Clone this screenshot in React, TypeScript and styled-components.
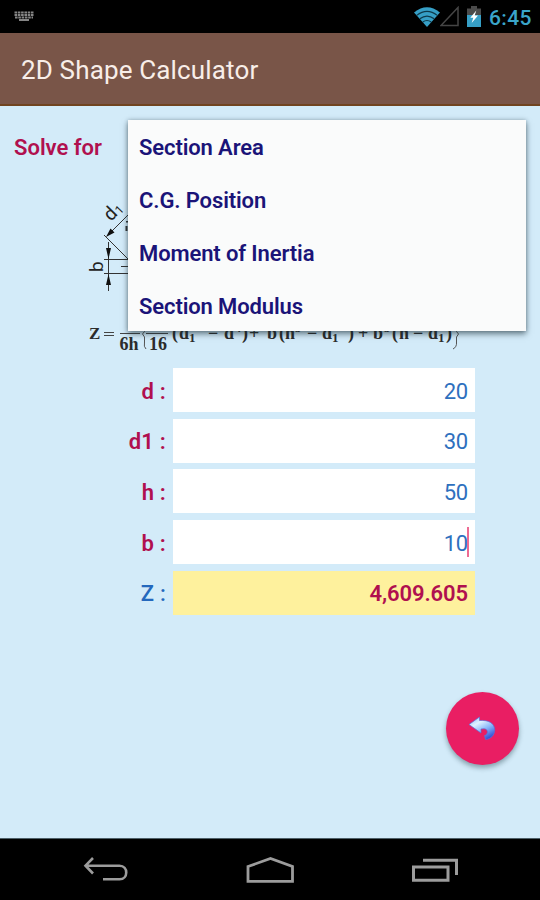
import React from 'react';
import styled, { createGlobalStyle } from 'styled-components';

const GlobalStyle = createGlobalStyle`
  * { box-sizing: border-box; }
  body { margin: 0; background: #d3ebf9; font-family: Roboto, sans-serif; }
`;

const Screen = styled.div`
  width: 540px;
  height: 900px;
  display: flex;
  flex-direction: column;
  overflow: hidden;
  background: #d3ebf9;
`;

const StatusBar = styled.header`
  height: 33px;
  flex: none;
  display: flex;
  align-items: center;
  justify-content: space-between;
  padding: 0 8px 0 14px;
  background: #000;
`;

const StatusGroup = styled.div`
  display: flex;
  align-items: center;
`;

const Battery = styled.svg`
  margin-left: 8px;
`;

const Clock = styled.span`
  width: 43px;
  margin-left: 8px;
  font-size: 21px;
  line-height: 33px;
  letter-spacing: 0.4px;
  font-weight: 500;
  color: #3aa5ca;
  padding-top: 3px;
`;

const AppBar = styled.div`
  height: 73px;
  flex: none;
  display: flex;
  align-items: center;
  padding: 3px 21px 0;
  background: #795548;
  border-bottom: 2px solid #704420;
`;

const Title = styled.h1`
  margin: 0;
  font-size: 26px;
  font-weight: 400;
  letter-spacing: 0.15px;
  color: #f8eee9;
`;

const Content = styled.main`
  position: relative;
  flex: 1;
  display: flex;
  flex-direction: column;
`;

const SolveLabel = styled.div`
  height: 84px;
  padding: 29px 0 0 14px;
  font-size: 22px;
  line-height: 26px;
  font-weight: 600;
  letter-spacing: 0;
  color: #b0104f;
`;

const Figure = styled.svg`
  display: block;
  flex: none;
  margin-left: 80px;
`;

const Popup = styled.ul`
  position: absolute;
  left: 128px;
  top: 14px;
  width: 398px;
  height: 211px;
  margin: 0;
  padding: 0;
  list-style: none;
  background: #fafbfb;
  box-shadow: 0 3px 6px rgba(20, 40, 50, 0.55), 0 0 4px rgba(20, 40, 50, 0.25);
`;

const Option = styled.li`
  height: 52.9px;
  padding: 1px 11px 0;
  font-size: 22px;
  line-height: 53px;
  font-weight: 600;
  letter-spacing: -0.12px;
  color: #1a1478;
`;

const Fields = styled.div`
  display: grid;
  grid-template-columns: 166px 302px;
  column-gap: 7px;
  row-gap: 6.7px;
  padding-top: 8px;
`;

const Label = styled.label<{ $result?: boolean }>`
  display: flex;
  align-items: center;
  justify-content: flex-end;
  height: 44px;
  padding-top: 2px;
  font-size: 22px;
  font-weight: ${(p) => (p.$result ? 500 : 600)};
  letter-spacing: 0.2px;
  white-space: pre;
  color: ${(p) => (p.$result ? '#2468bd' : '#b0104f')};
`;

const Field = styled.div<{ $result?: boolean }>`
  display: flex;
  align-items: center;
  justify-content: flex-end;
  height: 44px;
  padding: 2px 7px 0 0;
  font-size: 22px;
  letter-spacing: ${(p) => (p.$result ? '-0.1px' : '-0.2px')};
  font-weight: ${(p) => (p.$result ? 600 : 400)};
  color: ${(p) => (p.$result ? '#b0104f' : '#2e70be')};
  background: ${(p) => (p.$result ? '#fef19d' : '#fff')};
`;

const Caret = styled.span`
  width: 1.5px;
  height: 30px;
  margin: -3px -0.5px 0 -1px;
  background: #ee6b93;
`;

const BackButton = styled.button`
  position: absolute;
  right: 21px;
  bottom: 73px;
  width: 73px;
  height: 73px;
  padding: 0 2px 2px 0;
  border: 0;
  border-radius: 50%;
  display: grid;
  place-items: center;
  background: #e91e63;
  box-shadow: 0 3px 5px rgba(20, 50, 60, 0.4);
`;

const NavBar = styled.nav`
  height: 62px;
  flex: none;
  display: flex;
  justify-content: space-between;
  align-items: center;
  padding: 0 81px 0 83px;
  background: #000;
  border-top: 1px solid #4d5f68;
`;

const rows = [
  { name: 'd', value: '20' },
  { name: 'd1', value: '30' },
  { name: 'h', value: '50' },
  { name: 'b', value: '10', focused: true },
  { name: 'Z', value: '4,609.605', result: true },
];

const options = ['Section Area', 'C.G. Position', 'Moment of Inertia', 'Section Modulus'];

const KeyboardIcon = () => (
  <svg width="20" height="11" viewBox="0 0 20 11" fill="none" stroke="#858585">
    <path d="M0.5 1.5h19M0.5 4h19M1 6.5h18" strokeWidth="1.8" strokeDasharray="2.6 0.7" />
    <path d="M5 9h10" strokeWidth="2" />
  </svg>
);

const WifiIcon = () => (
  <svg width="26" height="20" viewBox="0 0 26 20">
    <path d="M0 5.5Q13 -5 26 5.5L13 20Z" fill="#369fc6" />
    <path d="M2.7 8.4Q13 0.4 23.3 8.4M5.8 11.8Q13 6.3 20.2 11.8M8.8 15.1Q13 11.9 17.2 15.1" fill="none" stroke="#0e3a4b" strokeWidth="1.2" />
  </svg>
);

const SignalIcon = () => (
  <svg width="19" height="21" viewBox="0 0 19 21">
    <path d="M18 1.5V19.5H1Z" fill="none" stroke="#454545" strokeWidth="1.5" />
  </svg>
);

const BatteryIcon = () => (
  <Battery width="14" height="21" viewBox="0 0 14 21">
    <path d="M4 0h6v2.500h4V9H0V2.500h4Z" fill="#4b4b4b" />
    <path d="M0 9h14v12H0Z" fill="#369fc6" />
    <path d="M9.3 4.5L3.3 11.7H6.3L4.7 17L11 9.5H7.7Z" fill="#fff" />
  </Battery>
);

const SectionFigure = () => (
  <Figure width="390" height="170" viewBox="80 190 390 170">
    <g fill="none" stroke="#333" strokeWidth="1">
      <path d="M104 235L129 260M107 236L130 213M104 259.5H132M104 273.500H132M108.5 242V291M121 266.5H132" />
      <path d="M127 221v1.500M126.500 226v5" strokeWidth="2" />
    </g>
    <path d="M106 237L110.500 228.500L114.500 232.500ZM108.500 259L106 248H111ZM108.500 274L106 285H111Z" fill="#111" />
    <g fontFamily="Roboto, sans-serif" fill="#222">
      <text transform="translate(111 222) rotate(-46)" fontSize="19">d</text>
      <text transform="translate(120 215) rotate(-46)" fontSize="12">1</text>
      <text transform="translate(102.500 272) rotate(-90)" fontSize="19">b</text>
    </g>
    <g fontFamily="Liberation Serif, serif" fontWeight="700" fontSize="18" fill="#2c2c2c">
      <text x="89" y="339" fontSize="17">Z</text>
      <text x="119.5" y="350" textLength="19">6h</text>
      <text x="149" y="350" textLength="18">16</text>
      <text x="172" y="338.500">(</text>
      <text x="179" y="338.500">d</text>
      <text x="189" y="342" fontSize="13">1</text>
      <text x="208" y="338.500">−</text>
      <text x="224" y="338.500">d</text>
      <text x="235" y="332" fontSize="12">4</text>
      <text x="242" y="338.500">)</text>
      <text x="249" y="338.500">+</text>
      <text x="267" y="338.500">b</text>
      <text x="279" y="338.500">(</text>
      <text x="285" y="338.500">h</text>
      <text x="295" y="332" fontSize="12">3</text>
      <text x="307" y="338.500">−</text>
      <text x="322" y="338.500">d</text>
      <text x="332" y="342" fontSize="13">1</text>
      <text x="348" y="338.500">)</text>
      <text x="358" y="338.500">+</text>
      <text x="373" y="338.500">b</text>
      <text x="384" y="332" fontSize="12">3</text>
      <text x="392" y="338.500">(</text>
      <text x="399" y="338.500">h</text>
      <text x="413" y="338.500">−</text>
      <text x="428" y="338.500">d</text>
      <text x="438" y="342" fontSize="13">1</text>
      <text x="446" y="338.500">)</text>
    </g>
    <path d="M104 332.500H114M104 335.500H114M120 333.500H140M146 333.500H168" stroke="#444" fill="none" />
    <path d="M146 319Q143 321 144.500 328Q145.500 332 142.500 334Q145.500 336 144.500 342Q143.500 347 146 349M455 319Q458 321 456.500 328Q455.500 332 458.500 334Q455.500 336 456.500 342Q457 347 453 349" stroke="#555" fill="none" />
  </Figure>
);

const UndoIcon = () => (
  <svg width="28" height="24" viewBox="0 0 28 24">
    <defs>
      <linearGradient id="undoFill" x1="0" y1="0" x2="0.65" y2="1">
        <stop offset="0" stopColor="#7fb4fb" />
        <stop offset="0.35" stopColor="#e0f3ff" />
        <stop offset="0.65" stopColor="#8bb9fa" />
        <stop offset="1" stopColor="#3855d7" />
      </linearGradient>
    </defs>
    <path d="M1 8.500L11.500 1V4.500C20 3.800 26.500 7 26.700 13.500C26.800 19 23 23 17.500 23.500L16.500 19.500C20.500 18.500 20.500 13 16 12.800L13 13V17Z" fill="url(#undoFill)" stroke="#5a70d8" strokeWidth="0.7" />
  </svg>
);

const NavBackIcon = () => (
  <svg width="46" height="26" viewBox="84 859 46 26" fill="none" stroke="#9c9c9c" strokeWidth="2.600">
    <path d="M94 860L86.500 867.700L94 875.500M87 867.700H120.500C129.500 867.700 129.500 881.300 120.500 881.300H104" />
  </svg>
);

const NavHomeIcon = () => (
  <svg width="50" height="28" viewBox="245 856 50 28" fill="none" stroke="#9c9c9c" strokeWidth="2.800">
    <path d="M248 866.500L270.500 858.500L292.500 866.500V881.300H248Z" />
  </svg>
);

const NavRecentIcon = () => (
  <svg width="48" height="26" viewBox="412 858 48 26" fill="none" stroke="#9c9c9c" strokeWidth="3">
    <path d="M414.500 868H449V881.300H414.500ZM424 861.300H457.500V876" />
  </svg>
);

export default function App() {
  return (
    <>
      <GlobalStyle />
      <Screen>
        <StatusBar>
          <KeyboardIcon />
          <StatusGroup>
            <WifiIcon />
            <SignalIcon />
            <BatteryIcon />
            <Clock>6:45</Clock>
          </StatusGroup>
        </StatusBar>
        <AppBar>
          <Title>2D Shape Calculator</Title>
        </AppBar>
        <Content>
          <SolveLabel>Solve for</SolveLabel>
          <SectionFigure />
          <Fields>
            {rows.map((r) => (
              <React.Fragment key={r.name}>
                <Label $result={r.result}>{r.name + ' :'}</Label>
                <Field $result={r.result}>
                  {r.value}
                  {r.focused && <Caret />}
                </Field>
              </React.Fragment>
            ))}
          </Fields>
          <Popup>
            {options.map((o) => (
              <Option key={o}>{o}</Option>
            ))}
          </Popup>
          <BackButton aria-label="Back">
            <UndoIcon />
          </BackButton>
        </Content>
        <NavBar>
          <NavBackIcon />
          <NavHomeIcon />
          <NavRecentIcon />
        </NavBar>
      </Screen>
    </>
  );
}
